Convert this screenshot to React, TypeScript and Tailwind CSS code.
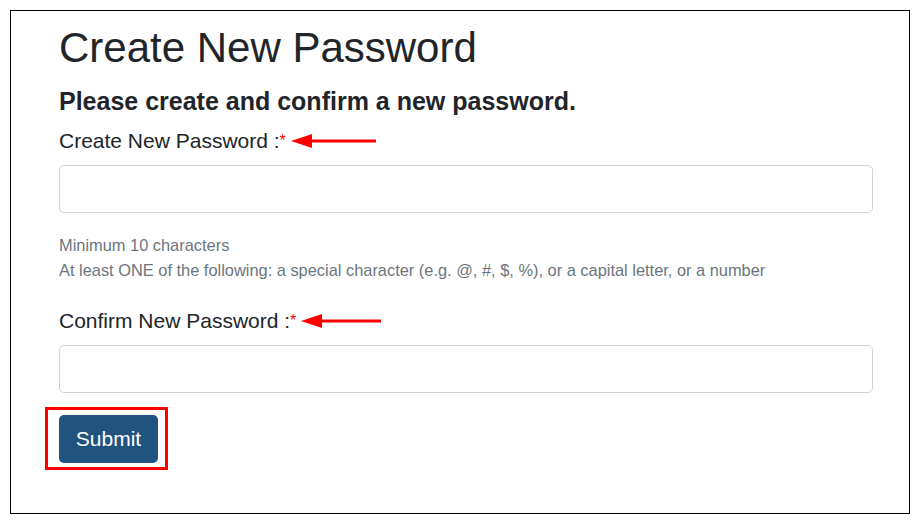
export default function App() {
  const Arrow = ({ w }: { w: number }) => (
    <svg width={w} height="16" viewBox={`0 0 ${w} 16`} className="ml-[5px] shrink-0">
      <polygon points={`0,8 21,1 21,15`} fill="#ff0000" />
      <rect x="18" y="6.5" width={w - 18} height="3" fill="#ff0000" />
    </svg>
  );

  return (
    <div className="w-[922px] h-[525px] bg-white pt-[10px] pl-[10px]" style={{ fontFamily: '"Liberation Sans", Arial, sans-serif' }}>
      <div className="w-[900px] h-[504px] border border-black pl-[48px] pr-[36px] pt-[13px] text-[#212529]">
        <h1 className="text-[42px] leading-[48px] font-normal">Create New Password</h1>
        <h4 className="mt-[14px] text-[25px] leading-[30px] font-bold text-[#212529]">Please create and confirm a new password.</h4>
        <div className="mt-[12px] flex items-center h-[26px]">
          <label className="text-[21px] leading-[26px]">
            Create New Password :<span className="text-[#ff0000] text-[16px] align-top">*</span>
          </label>
          <Arrow w={85} />
        </div>
        <input type="password" className="mt-[11px] block w-full h-[48px] border border-[#ced4da] rounded-[5px] bg-white" />
        <div className="mt-[20px] text-[16.4px] leading-[25px] text-[#6c757d]">
          <div>Minimum 10 characters</div>
          <div>At least ONE of the following: a special character (e.g. @, #, $, %), or a capital letter, or a number</div>
        </div>
        <div className="mt-[25px] flex items-center h-[26px]">
          <label className="text-[21px] leading-[26px]">
            Confirm New Password :<span className="text-[#ff0000] text-[16px] align-top">*</span>
          </label>
          <Arrow w={80} />
        </div>
        <input type="password" className="mt-[11px] block w-full h-[48px] border border-[#ced4da] rounded-[5px] bg-white" />
        <div className="mt-[14px] ml-[-14px] w-[123px] h-[63px] border-[3px] border-[#ff0000] flex items-center pl-[11px]">
          <button className="w-[99px] h-[48px] rounded-[5px] bg-[#20547f] text-white text-[21px]">Submit</button>
        </div>
      </div>
    </div>
  );
}
